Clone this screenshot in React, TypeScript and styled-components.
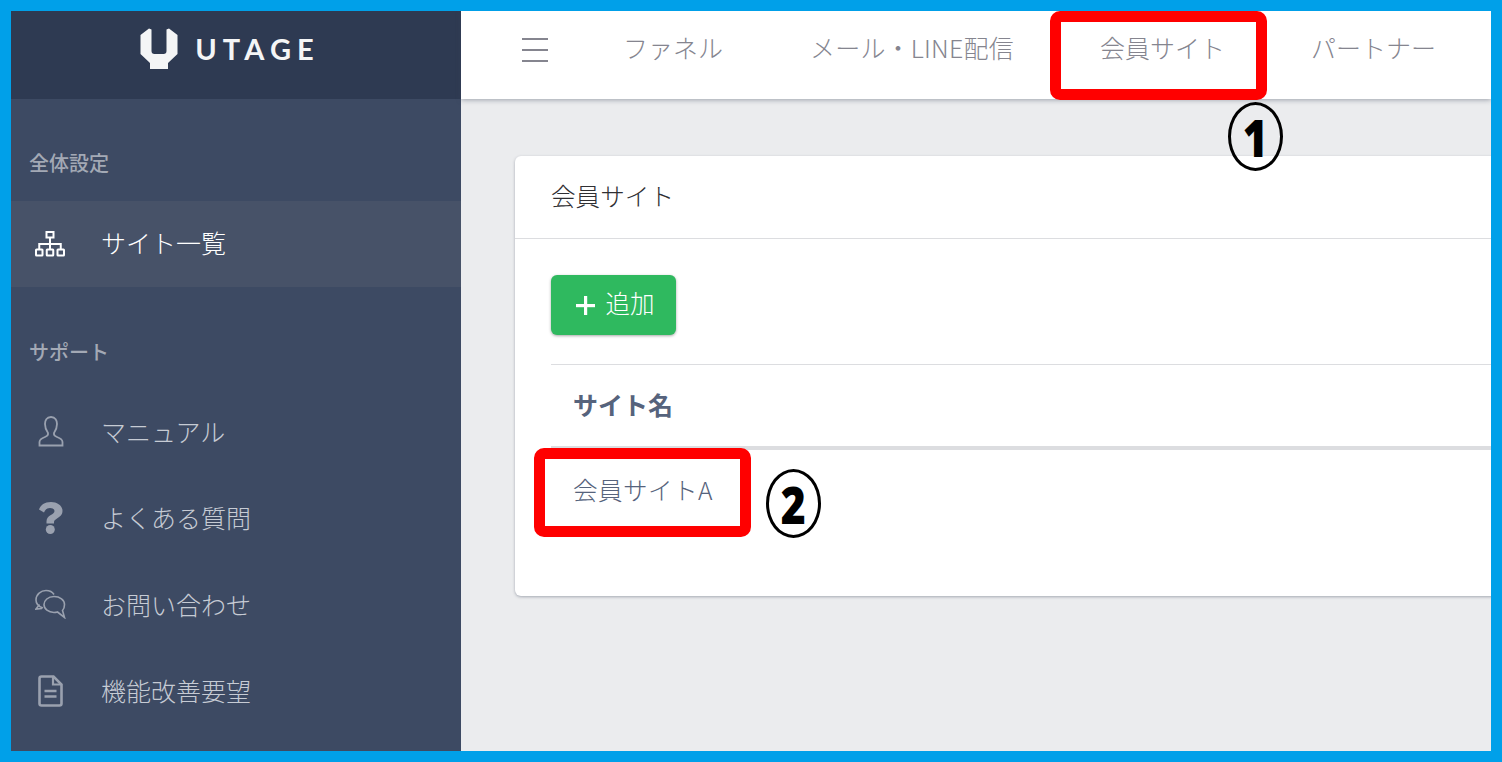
import React from "react";
import styled, { createGlobalStyle } from "styled-components";

const Global = createGlobalStyle`
  html, body { margin: 0; padding: 0; background: #00a0e9; }
  * { box-sizing: border-box; }
`;

const Frame = styled.div`
  position: relative;
  width: 1502px;
  height: 762px;
  border: 11px solid #00a0e9;
  display: flex;
  overflow: hidden;
  font-family: "Noto Sans CJK JP", "Noto Sans", sans-serif;
  font-weight: 300;
  background: #ebecee;
`;

const Sidebar = styled.aside`
  width: 450px;
  flex: none;
  background: #3d4a63;
  display: flex;
  flex-direction: column;
`;

const Brand = styled.div`
  height: 88px;
  flex: none;
  background: #2e3a52;
  display: flex;
  align-items: flex-start;
  justify-content: center;
  gap: 17px;
  padding: 17px 18px 0 0;
`;

const BrandName = styled.span`
  font-family: "Lato", "Liberation Sans", sans-serif;
  font-weight: 700;
  font-size: 29px;
  line-height: 42px;
  letter-spacing: 6.1px;
  margin-right: -6.1px;
  color: #f4f5f6;
`;

const SectionLabel = styled.div<{ $top: number; $bottom: number }>`
  padding: ${(p) => p.$top}px 0 ${(p) => p.$bottom}px 18px;
  font-size: 20px;
  line-height: 28px;
  font-weight: 500;
  color: #a3a9b5;
`;

const NavItem = styled.div<{ $active?: boolean }>`
  height: 86.4px;
  flex: none;
  display: flex;
  align-items: center;
  background: ${(p) => (p.$active ? "#475268" : "transparent")};
  color: ${(p) => (p.$active ? "#ffffff" : "#c6cbd4")};
`;

const NavIcon = styled.span<{ $active?: boolean }>`
  width: 90px;
  padding-left: 24px;
  flex: none;
  display: flex;
  align-items: center;
  color: ${(p) => (p.$active ? "#ffffff" : "#9aa1af")};
`;

const NavText = styled.span<{ $lift?: number }>`
  font-size: 25px;
  line-height: 36px;
  position: relative;
  top: ${(p) => p.$lift ?? -1}px;
`;

const Main = styled.main`
  flex: 1;
  min-width: 0;
  display: flex;
  flex-direction: column;
`;

const Topbar = styled.header`
  height: 88px;
  flex: none;
  background: #ffffff;
  box-shadow: 0 1px 5px rgba(60, 70, 90, 0.45);
  display: flex;
  align-items: flex-start;
  padding: 16px 0 0 61px;
  position: relative;
  z-index: 1;
`;

const Burger = styled.span`
  width: 26px;
  height: 24px;
  margin-top: 11px;
  margin-right: 75px;
  flex: none;
  border-top: 2px solid #85858f;
  border-bottom: 2px solid #85858f;
  position: relative;
  &::after {
    content: "";
    position: absolute;
    left: 0;
    right: 0;
    top: 9px;
    height: 2px;
    background: #85858f;
  }
`;

const TopLink = styled.a<{ $gap: number; $tracking?: number }>`
  margin-right: ${(p) => p.$gap}px;
  font-size: 25px;
  line-height: 40px;
  letter-spacing: ${(p) => p.$tracking ?? 0}px;
  color: #85858f;
  white-space: nowrap;
`;

const Content = styled.div`
  flex: 1;
  min-height: 0;
  padding: 57px 0 0 54px;
  width: 1100px;
`;

const Card = styled.section`
  width: 1100px;
  height: 440px;
  background: #ffffff;
  border-radius: 6px;
  box-shadow: 0 1px 3px rgba(60, 70, 90, 0.4);
`;

const CardHead = styled.div`
  height: 83px;
  padding: 19px 36px 0;
  border-bottom: 1px solid #dcdde0;
  font-size: 24.6px;
  line-height: 40px;
  font-weight: 300;
  color: #2f2f33;
`;

const CardBody = styled.div`
  padding: 36px 0 0 36px;
`;

const AddButton = styled.button`
  width: 125px;
  height: 60px;
  border: 0;
  border-radius: 6px;
  background: #2fb95f;
  box-shadow: 0 1px 3px rgba(0, 0, 0, 0.35);
  color: #ffffff;
  display: flex;
  align-items: center;
  justify-content: center;
  gap: 11px;
  padding: 0 0 0 3px;
  font-family: inherit;
  font-weight: 300;
  font-size: 24.5px;
  line-height: 36px;
`;

const AddLabel = styled.span`
  position: relative;
  top: -2px;
`;

const Table = styled.div`
  margin-top: 29px;
  color: #56637c;
`;

const HeadRow = styled.div`
  height: 86px;
  border-top: 1px solid #dcdde0;
  border-bottom: 4px solid #dcdde0;
  padding: 19px 0 0 22px;
  font-size: 25px;
  line-height: 40px;
  font-weight: 700;
  color: #56637c;
`;

const BodyRow = styled.div`
  padding: 19px 0 0 22px;
  font-size: 24.6px;
  line-height: 40px;
  letter-spacing: 0.4px;
  font-weight: 300;
`;

const Callout = styled.div<{ $x: number; $y: number }>`
  position: absolute;
  left: ${(p) => p.$x}px;
  top: ${(p) => p.$y}px;
  width: 217px;
  height: 89px;
  border: 11px solid #ff0000;
  border-radius: 10px;
  z-index: 2;
`;

const Badge = styled.div<{ $x: number; $y: number }>`
  position: absolute;
  left: ${(p) => p.$x}px;
  top: ${(p) => p.$y}px;
  width: 55px;
  height: 69px;
  border: 3.5px solid #000000;
  border-radius: 50%;
  display: flex;
  align-items: center;
  justify-content: center;
  z-index: 2;
`;

const BadgeDigit = styled.span`
  font-family: "Open Sans", "Noto Sans", sans-serif;
  font-weight: 800;
  font-size: 52px;
  line-height: 1;
  color: #000000;
  transform: scaleX(0.82);
`;

const LogoMark = styled.svg`
  flex: none;
`;

const Logo = () => (
  <LogoMark width="38" height="41" viewBox="0 0 38 41" fill="#f4f5f6">
    <path d="M0.5 7 L9 0.5 L11.5 1.5 V23 Q11.5 26 14.5 26 H23.5 Q26.5 26 26.5 23 V1.5 L29 0.5 L37.5 7 V26 L28 35 V41 H10 V35 L0.5 26 Z" />
  </LogoMark>
);

const SiteMap = () => (
  <svg width="30" height="26" viewBox="0 0 30 26" fill="none" stroke="currentColor" strokeWidth="2">
    <rect x="11.5" y="1" width="7" height="5.5" />
    <rect x="1" y="18.5" width="6.5" height="6" rx="0.5" />
    <rect x="11.75" y="18.5" width="6.5" height="6" rx="0.5" />
    <rect x="22.5" y="18.5" width="6.5" height="6" rx="0.5" />
    <path d="M15 6.5 V18.5 M4.25 18.5 V13 H25.75 V18.5" />
  </svg>
);

const User = () => (
  <svg width="26" height="31" viewBox="0 0 26 31" fill="none" stroke="currentColor" strokeWidth="1.8" style={{ marginLeft: 3 }}>
    <path d="M13 1 C8.5 1 7 4.5 7 8 C7 12 8.5 15 10 17 C10.5 19 9.5 20 7 21 C3 22.5 1.5 24 1.5 26 V29.5 H24.5 V26 C24.5 24 23 22.5 19 21 C16.5 20 15.5 19 16 17 C17.5 15 19 12 19 8 C19 4.5 17.5 1 13 1 Z" />
  </svg>
);

const Question = () => (
  <svg width="24" height="32" viewBox="0 0 24 32" fill="currentColor" style={{ marginLeft: 4 }}>
    <path d="M12 0 C5.5 0 1.5 3 0 7.5 L5 10.5 C6 8 7.8 6 11 6 C13.5 6 15.5 7.2 15.5 9 C15.5 11 13.8 11.8 11.8 13 C9 14.5 7.5 16.5 7.5 19.5 V21.5 H15 V20 C15 18.5 16 17.8 18 16.5 C21 14.8 23.5 12.8 23.5 8.8 C23.5 3.5 18 0 12 0 Z" />
    <circle cx="11.3" cy="27.5" r="4.5" />
  </svg>
);

const Chat = () => (
  <svg width="31" height="30" viewBox="0 0 31 30" fill="none" stroke="currentColor" strokeWidth="1.6">
    <path d="M8 19 C3.5 17.5 1 15 1 11 C1 5.5 6 1.5 11 1.5 C14.5 1.5 17.5 3 19 5.5" />
    <path d="M4.5 15.5 L1 20 L7 19.5" />
    <path d="M19 7.5 C13 7.5 9 11.5 9 15.5 C9 20 13.5 23.5 19 23.5 C20.5 23.5 21.5 23.3 22.5 23 L29.5 28.5 L27.5 21.5 C29 20 29.5 18 29.5 15.5 C29.5 11 25 7.5 19 7.5 Z" />
  </svg>
);

const FileDoc = () => (
  <svg width="25" height="32" viewBox="0 0 25 32" fill="none" stroke="currentColor" strokeWidth="2.6" style={{ marginLeft: 3 }}>
    <path d="M3.5 1.5 H15.5 L23.5 9.5 V28.5 Q23.5 30.5 21.5 30.5 H3.5 Q1.5 30.5 1.5 28.5 V3.5 Q1.5 1.5 3.5 1.5 Z" />
    <path d="M15 1.5 V9.5 H23.5" strokeWidth="2.2" />
    <path d="M6.5 16 H18.5 M6.5 21.5 H18.5" />
  </svg>
);

const Plus = () => (
  <svg width="19" height="19" viewBox="0 0 19 19" fill="#ffffff">
    <rect x="8" y="0" width="3.2" height="19" />
    <rect x="0" y="8" width="19" height="3.2" />
  </svg>
);

export default function App() {
  return (
    <>
      <Global />
      <Frame>
        <Sidebar>
          <Brand>
            <Logo />
            <BrandName>UTAGE</BrandName>
          </Brand>
          <SectionLabel $top={50} $bottom={24}>全体設定</SectionLabel>
          <NavItem $active>
            <NavIcon $active><SiteMap /></NavIcon>
            <NavText $lift={-2}>サイト一覧</NavText>
          </NavItem>
          <SectionLabel $top={51} $bottom={22}>サポート</SectionLabel>
          <NavItem>
            <NavIcon><User /></NavIcon>
            <NavText>マニュアル</NavText>
          </NavItem>
          <NavItem>
            <NavIcon><Question /></NavIcon>
            <NavText>よくある質問</NavText>
          </NavItem>
          <NavItem>
            <NavIcon><Chat /></NavIcon>
            <NavText $lift={0}>お問い合わせ</NavText>
          </NavItem>
          <NavItem>
            <NavIcon><FileDoc /></NavIcon>
            <NavText>機能改善要望</NavText>
          </NavItem>
        </Sidebar>
        <Main>
          <Topbar>
            <Burger />
            <TopLink $gap={87}>ファネル</TopLink>
            <TopLink $gap={86} $tracking={0.2}>メール・LINE配信</TopLink>
            <TopLink $gap={86}>会員サイト</TopLink>
            <TopLink $gap={0}>パートナー</TopLink>
          </Topbar>
          <Content>
            <Card>
              <CardHead>会員サイト</CardHead>
              <CardBody>
                <AddButton><Plus /><AddLabel>追加</AddLabel></AddButton>
                <Table>
                  <HeadRow>サイト名</HeadRow>
                  <BodyRow>会員サイトA</BodyRow>
                </Table>
              </CardBody>
            </Card>
          </Content>
        </Main>
        <Callout $x={1039} $y={0} />
        <Badge $x={1217} $y={91}><BadgeDigit>1</BadgeDigit></Badge>
        <Callout $x={523} $y={437} />
        <Badge $x={755} $y={458}><BadgeDigit>2</BadgeDigit></Badge>
      </Frame>
    </>
  );
}
